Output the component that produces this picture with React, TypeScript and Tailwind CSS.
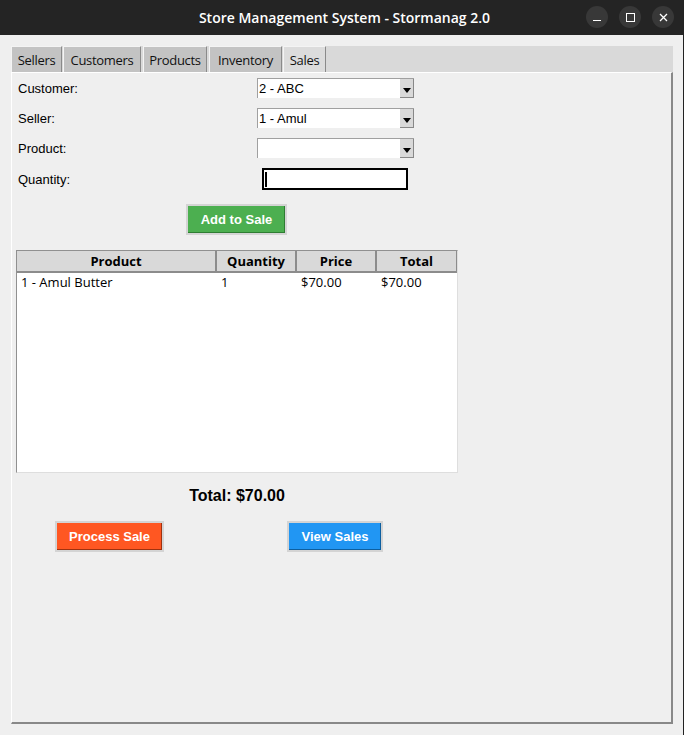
const tabs = ["Sellers", "Customers", "Products", "Inventory", "Sales"];

const tabWidths = ["w-[51px] mr-[1px]", "w-[78px] mr-[2px]", "w-[64px] mr-[2px]", "w-[73px] mr-[1px]", "w-[43px]"];

const fields = [
  { label: "Customer:", value: "2 - ABC" },
  { label: "Seller:", value: "1 - Amul" },
  { label: "Product:", value: "" },
];

function Combo({ value }: { value: string }) {
  return (
    <div className="flex w-[157px] h-[20px] bg-white border-t border-l border-[#a0a0a0]">
      <span className="flex-1 pl-[1px] text-[13px] leading-[19px] text-black">{value}</span>
      <span className="w-[14px] h-[19px] bg-[#d9d9d9] border-r border-b border-[#888] flex items-end justify-center pb-[4px]">
        <svg width="8" height="5" viewBox="0 0 8 5">
          <polygon points="0,0 8,0 4,5" fill="#000" />
        </svg>
      </span>
    </div>
  );
}

export default function App() {
  return (
    <div className="w-[684px] h-[735px] bg-[#efefef] flex flex-col border-r border-[#222] font-['Liberation_Sans',sans-serif]">
      <div className="h-[35px] bg-[#242424] flex items-center relative">
        <span className="flex-1 text-center text-white text-[14px] font-['Open_Sans',sans-serif] font-semibold pl-[6px]">
          Store Management System - Stormanag 2.0
        </span>
        <div className="absolute right-[9px] top-[6px] flex gap-[11px]">
          <span className="w-[22px] h-[22px] rounded-full bg-[#383838] flex items-center justify-center">
            <span className="w-[8px] h-[1px] bg-white mt-[6px]" />
          </span>
          <span className="w-[22px] h-[22px] rounded-full bg-[#383838] flex items-center justify-center">
            <span className="w-[9px] h-[9px] border border-white" />
          </span>
          <span className="w-[22px] h-[22px] rounded-full bg-[#383838] flex items-center justify-center">
            <svg width="9" height="9" viewBox="0 0 9 9">
              <path d="M1 1 L8 8 M8 1 L1 8" stroke="#fff" strokeWidth="1.3" />
            </svg>
          </span>
        </div>
      </div>

      <div className="flex-1 flex flex-col pt-[11px] pl-[11px] pr-[10px] pb-[11px]">
        <div className="flex h-[26px] bg-[#d9d9d9] items-end">
          {tabs.map((t, i) => (
            <div
              key={t}
              className={`${tabWidths[i]} h-[26px] flex items-center justify-center pt-[2px] text-[13px] tracking-[-0.3px] font-['Open_Sans',sans-serif] text-[#111] border-t border-l border-[#f4f4f4] border-r border-r-[#8a8a8a] ${
                t === "Sales" ? "bg-[#dcdcdc]" : "bg-[#c3c3c3]"
              }`}
            >
              {t}
            </div>
          ))}
        </div>

        <div className="flex-1 border-l border-t border-white border-r-2 border-b-2 border-r-[#888] border-b-[#888] flex flex-col pl-[6px]">
          <div className="flex flex-col pt-[5px]">
            {fields.map((f) => (
              <div key={f.label} className="flex items-center h-[20px] mb-[10px]">
                <span className="w-[239px] text-[13px] text-black pt-[2px]">{f.label}</span>
                <Combo value={f.value} />
              </div>
            ))}
            <div className="flex items-center h-[22px] mt-[0px]">
              <span className="w-[244px] text-[13px] text-black pt-[2px]">Quantity:</span>
              <div className="w-[146px] h-[22px] bg-white border-2 border-black flex items-center pl-[1px]">
                <span className="w-[2px] h-[15px] bg-black" />
              </div>
            </div>
          </div>

          <div className="flex pl-[168px] mt-[14px]">
            <button className="w-[101px] h-[31px] border-2 border-[#d4d4d4] bg-[#4caf50] text-white font-bold text-[13px] shadow-[inset_-1px_-1px_0_#2e7d32]">
              Add to Sale
            </button>
          </div>

          <div className="mt-[15px] ml-[-2px] w-[442px] h-[223px] bg-white border-t border-l border-[#909090] border-r border-b border-r-[#dedede] border-b-[#dedede] flex flex-col">
            <div className="flex h-[22px] font-['Open_Sans',sans-serif] font-bold text-[13px] text-black">
              <span className="w-[200px] bg-[#d9d9d9] border-r-2 border-b-2 border-[#8c8c8c] flex items-center justify-center pt-[2px]">Product</span>
              <span className="w-[80px] bg-[#d9d9d9] border-r-2 border-b-2 border-[#8c8c8c] flex items-center justify-center pt-[2px]">Quantity</span>
              <span className="w-[80px] bg-[#d9d9d9] border-r-2 border-b-2 border-[#8c8c8c] flex items-center justify-center pt-[2px]">Price</span>
              <span className="flex-1 bg-[#d9d9d9] border-r border-b-2 border-[#8c8c8c] flex items-center justify-center pt-[2px]">Total</span>
            </div>
            <div className="flex h-[20px] items-center font-['Open_Sans',sans-serif] text-[13px] text-black">
              <span className="w-[200px] pl-[4px]">1 - Amul Butter</span>
              <span className="w-[80px] pl-[4px]">1</span>
              <span className="w-[80px] pl-[4px]">$70.00</span>
              <span className="flex-1 pl-[4px]">$70.00</span>
            </div>
          </div>

          <div className="w-[442px] ml-[-2px] text-center mt-[11px] font-bold text-[16px] text-black">Total: $70.00</div>

          <div className="flex mt-[13px] pl-[37px]">
            <button className="w-[109px] h-[31px] border-2 border-[#d4d4d4] bg-[#ff5722] text-white font-bold text-[13px] shadow-[inset_-1px_-1px_0_#a0320f]">
              Process Sale
            </button>
            <button className="ml-[123px] w-[96px] h-[31px] border-2 border-[#d4d4d4] bg-[#2196f3] text-white font-bold text-[13px] shadow-[inset_-1px_-1px_0_#0d5fa0]">
              View Sales
            </button>
          </div>
        </div>
      </div>
    </div>
  );
}
